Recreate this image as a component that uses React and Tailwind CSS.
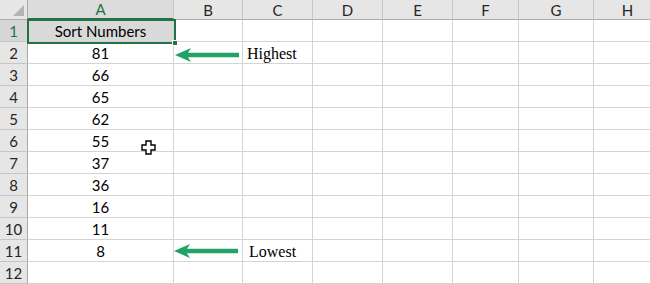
const cols = [
  { key: "A", w: "w-[146px]" },
  { key: "B", w: "w-[69px]" },
  { key: "C", w: "w-[70px]" },
  { key: "D", w: "w-[70px]" },
  { key: "E", w: "w-[70px]" },
  { key: "F", w: "w-[66px]" },
  { key: "G", w: "w-[75px]" },
  { key: "H", w: "w-[68px]" },
];

const values = ["Sort Numbers", "81", "66", "65", "62", "55", "37", "36", "16", "11", "8", ""];

function Arrow({ className }) {
  return (
    <svg className={className} width="64" height="16" viewBox="0 0 64 16">
      <path d="M0 8 L16 1 L13 5.7 L64 5.7 L64 10.3 L13 10.3 L16 15 Z" fill="#21a366" />
    </svg>
  );
}

function MoveCursor() {
  return (
    <svg width="15" height="15" viewBox="0 0 15 15" className="absolute left-[141px] top-[140px]">
      <path
        d="M5 1 H10 V5 H14 V10 H10 V14 H5 V10 H1 V5 H5 Z"
        fill="#fff"
        stroke="#000"
        strokeWidth="1.4"
        strokeLinejoin="miter"
      />
    </svg>
  );
}

export default function App() {
  return (
    <div className="relative w-[650px] h-[284px] overflow-hidden bg-white font-['Lato','Calibri',sans-serif] text-[15px] text-black">
      {/* column headers */}
      <div className="flex h-[20px]">
        <div className="relative w-[28px] shrink-0 bg-[#e6e6e6] border-r border-b border-[#ababab]">
          <div className="absolute right-[3px] bottom-[3px] w-0 h-0 border-l-[11px] border-l-transparent border-b-[11px] border-b-[#b4b4b4]" />
        </div>
        {cols.map((c) => (
          <div
            key={c.key}
            className={`${c.w} shrink-0 flex items-center justify-center pt-[1px] border-r border-[#c6c6c6] ${
              c.key === "A"
                ? "bg-[#dcdcdc] text-[#217346] border-b-2 border-b-[#217346]"
                : "bg-[#e6e6e6] text-[#262626] border-b border-b-[#ababab]"
            }`}
          >
            {c.key}
          </div>
        ))}
      </div>

      {/* rows */}
      {values.map((v, i) => (
        <div key={i} className="flex h-[22px]">
          <div
            className={`w-[28px] shrink-0 flex items-center justify-center pt-[2px] border-r border-b border-r-[#ababab] border-b-[#c6c6c6] ${
              i === 0 ? "bg-[#d6d6d6] text-[#217346]" : "bg-[#e6e6e6] text-[#262626]"
            }`}
          >
            {i + 1}
          </div>
          {cols.map((c) => (
            <div
              key={c.key}
              className={`${c.w} shrink-0 flex items-center pt-[2px] border-r border-b border-[#d4d4d4] ${
                c.key === "A" ? "justify-center" : ""
              } ${c.key === "A" && i === 0 ? "bg-[#d9d9d9]" : ""}`}
            >
              {c.key === "A" && v}
              {c.key === "C" && i === 1 && (
                <span className="pl-[4px] font-['Liberation_Serif',serif] text-[16px] whitespace-nowrap">Highest</span>
              )}
              {c.key === "C" && i === 10 && (
                <span className="pl-[6px] font-['Liberation_Serif',serif] text-[16px] whitespace-nowrap">Lowest</span>
              )}
            </div>
          ))}
        </div>
      ))}

      {/* selection on A1 */}
      <div className="absolute left-[27px] top-[19px] w-[149px] h-[25px] border-2 border-[#217346] pointer-events-none" />
      <div className="absolute left-[172px] top-[40px] w-[6px] h-[6px] bg-[#217346] border border-white" />

      {/* arrows */}
      <Arrow className="absolute left-[175px] top-[47px]" />
      <Arrow className="absolute left-[174px] top-[243px]" />

      <MoveCursor />
    </div>
  );
}
